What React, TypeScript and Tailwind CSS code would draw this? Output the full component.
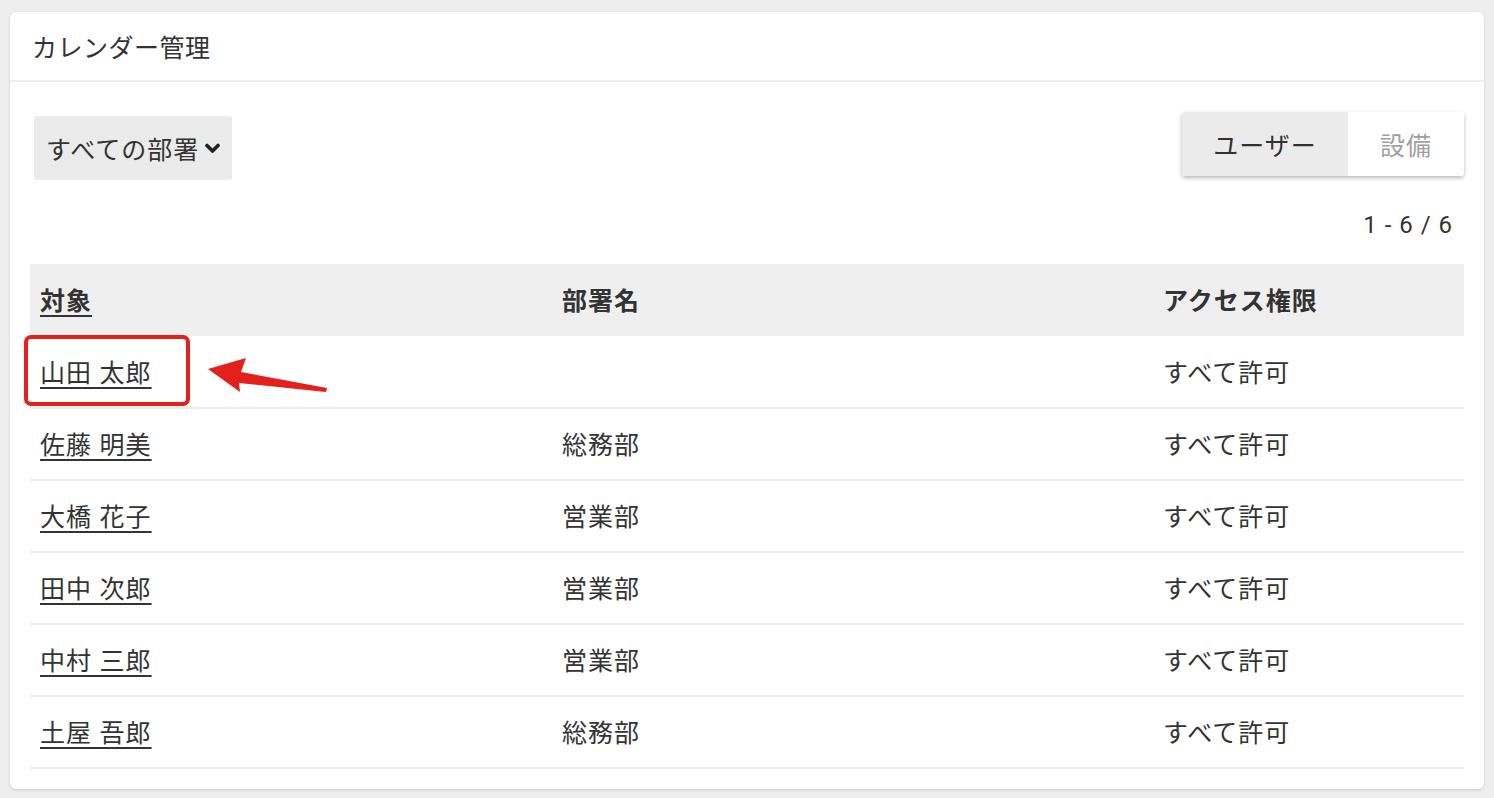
type Row = {
  name: string;
  dept: string;
  access: string;
};

const rows: Row[] = [
  { name: '山田 太郎', dept: '', access: 'すべて許可' },
  { name: '佐藤 明美', dept: '総務部', access: 'すべて許可' },
  { name: '大橋 花子', dept: '営業部', access: 'すべて許可' },
  { name: '田中 次郎', dept: '営業部', access: 'すべて許可' },
  { name: '中村 三郎', dept: '営業部', access: 'すべて許可' },
  { name: '土屋 吾郎', dept: '総務部', access: 'すべて許可' },
];

function Arrow() {
  return (
    <svg
      className="absolute left-[178px] top-[18px] pointer-events-none"
      width="124"
      height="40"
      viewBox="0 0 124 40"
    >
      <polygon
        points="0,15 38,4 33,18 119,34 118,38 31,29 32,38"
        fill="#e3201b"
      />
    </svg>
  );
}

export default function App() {
  return (
    <div
      className="min-h-[798px] bg-[#eeeeee] pt-3 px-[10px] text-[#333333]"
      style={{ fontFamily: '"Noto Sans CJK JP", "Noto Sans", sans-serif' }}
    >
      <div className="bg-white rounded-md shadow-[0_1px_3px_rgba(0,0,0,0.15)] pb-5">
        <header className="h-[70px] flex items-center px-[22px] border-b-2 border-[#eeeeee]">
          <h1 className="text-[25px] leading-none font-normal tracking-[0.5px]">カレンダー管理</h1>
        </header>

        <div className="px-5 pt-[30px] text-[25px] tracking-[1px]">
          <div className="flex items-start justify-between">
            <button className="mt-1 ml-1 h-16 w-[198px] flex items-center gap-[6px] pl-3 bg-[#ebebeb] rounded-[3px] leading-none">
              <span>すべての部署</span>
              <svg width="15" height="11" viewBox="0 0 15 11" className="mt-[1px]">
                <polyline
                  points="2,2.5 7.5,8 13,2.5"
                  fill="none"
                  stroke="#222222"
                  strokeWidth="3.6"
                  strokeLinecap="round"
                  strokeLinejoin="round"
                />
              </svg>
            </button>
            <div className="flex h-16 rounded-[3px] overflow-hidden shadow-[0_2px_4px_rgba(0,0,0,0.28)] leading-none">
              <button className="w-[166px] bg-[#ebebeb] flex items-center justify-center text-[#333333]">
                ユーザー
              </button>
              <button className="w-[116px] bg-white flex items-center justify-center text-[#a0a0a0]">
                設備
              </button>
            </div>
          </div>

          <div
            className="flex justify-end pr-[11px] mt-[27px] h-9 items-center text-[24px] tracking-[1px]"
            style={{ fontFamily: 'Roboto, "Noto Sans CJK JP", sans-serif' }}
          >
            1 - 6 / 6
          </div>

          <table className="w-full mt-[21px] border-collapse">
            <thead>
              <tr className="h-[72px] bg-[#efefef] text-left">
                <th className="w-[522px] pl-[10px] font-bold">
                  <span className="underline underline-offset-[5px] decoration-2">対象</span>
                </th>
                <th className="w-[601px] pl-[10px] font-bold">部署名</th>
                <th className="pl-[10px] font-bold">アクセス権限</th>
              </tr>
            </thead>
            <tbody>
              {rows.map((row, i) => (
                <tr key={row.name} className="h-[72px] border-b-2 border-[#ebebeb]">
                  <td className="pl-[10px] relative">
                    <a
                      href="#"
                      className="underline underline-offset-[5px] decoration-[1.5px] text-[#333333] [word-spacing:1px]"
                    >
                      {row.name}
                    </a>
                    {i === 0 && (
                      <>
                        <div className="absolute left-[-6px] top-[-1px] w-[166px] h-[71px] border-4 border-[#e3201b] rounded-[7px] pointer-events-none" />
                        <Arrow />
                      </>
                    )}
                  </td>
                  <td className="pl-[10px]">{row.dept}</td>
                  <td className="pl-[10px]">{row.access}</td>
                </tr>
              ))}
            </tbody>
          </table>
        </div>
      </div>
    </div>
  );
}
